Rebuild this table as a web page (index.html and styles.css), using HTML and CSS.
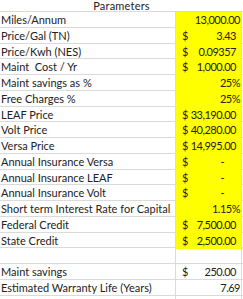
FILE: index.html
```html
<!DOCTYPE html>
<html>
<head>
<meta charset="utf-8">
<link rel="stylesheet" href="styles.css">
</head>
<body>
<div class="sheet">
  <div class="row head"><div class="title">Parameters</div></div>
  <div class="row"><div class="label">Miles/Annum</div><div class="val y"><span></span><span class="num plain">13,000.00</span></div></div>
  <div class="row"><div class="label">Price/Gal (TN)</div><div class="val y"><span>$</span><span class="num">3.43</span></div></div>
  <div class="row"><div class="label">Price/Kwh (NES)</div><div class="val y"><span>$</span><span class="num">0.09357</span></div></div>
  <div class="row"><div class="label">Maint&nbsp; Cost / Yr</div><div class="val y"><span>$</span><span class="num">1,000.00</span></div></div>
  <div class="row"><div class="label">Maint savings as %</div><div class="val y"><span></span><span class="num plain">25%</span></div></div>
  <div class="row"><div class="label">Free Charges %</div><div class="val y"><span></span><span class="num plain">25%</span></div></div>
  <div class="row"><div class="label">LEAF Price</div><div class="val y"><span>$</span><span class="num">33,190.00</span></div></div>
  <div class="row"><div class="label">Volt Price</div><div class="val y"><span>$</span><span class="num">40,280.00</span></div></div>
  <div class="row"><div class="label">Versa Price</div><div class="val y"><span>$</span><span class="num">14,995.00</span></div></div>
  <div class="row"><div class="label">Annual Insurance Versa</div><div class="val y"><span>$</span><span class="num dash">-</span></div></div>
  <div class="row"><div class="label">Annual Insurance LEAF</div><div class="val y"><span>$</span><span class="num dash">-</span></div></div>
  <div class="row"><div class="label">Annual Insurance Volt</div><div class="val y"><span>$</span><span class="num dash">-</span></div></div>
  <div class="row"><div class="label">Short term Interest Rate for Capital</div><div class="val y"><span></span><span class="num plain">1.15%</span></div></div>
  <div class="row"><div class="label">Federal Credit</div><div class="val y"><span>$</span><span class="num">7,500.00</span></div></div>
  <div class="row"><div class="label">State Credit</div><div class="val y"><span>$</span><span class="num">2,500.00</span></div></div>
  <div class="row"><div class="label"></div><div class="val"></div></div>
  <div class="row"><div class="label">Maint savings</div><div class="val"><span>$</span><span class="num">250.00</span></div></div>
  <div class="row"><div class="label">Estimated Warranty Life (Years)</div><div class="val"><span></span><span class="num plain">7.69</span></div></div>
  <div class="row"><div class="label"></div><div class="val"></div></div>
</div>
</body>
</html>
```

FILE: styles.css
```css
html, body {
  margin: 0;
  padding: 0;
  background: #fff;
}
.sheet {
  width: 243px;
  font-family: Lato, "Open Sans", sans-serif;
  font-size: 11px;
  color: #222;
}
.row {
  display: grid;
  grid-template-columns: 176px 66px;
  height: 15.75px;
  border-bottom: 1px solid #dadada;
  box-sizing: border-box;
}
.row.head {
  display: flex;
  justify-content: center;
  height: 12px;
}
.title {
  line-height: 11px;
  letter-spacing: 0.2px;
}
.label {
  padding-left: 1px;
  white-space: nowrap;
  line-height: 15px;
  border-right: 1px solid #dadada;
}
.val {
  display: flex;
  justify-content: space-between;
  padding-left: 6px;
  padding-right: 5px;
  line-height: 15px;
  border-right: 1px solid #dadada;
}
.val.y {
  background: #ffff00;
  margin-bottom: -1px;
}
.num {
  letter-spacing: -0.5px;
}
.num.plain {
  margin-right: -4px;
}
.num.dash {
  margin-right: 12px;
}
```
